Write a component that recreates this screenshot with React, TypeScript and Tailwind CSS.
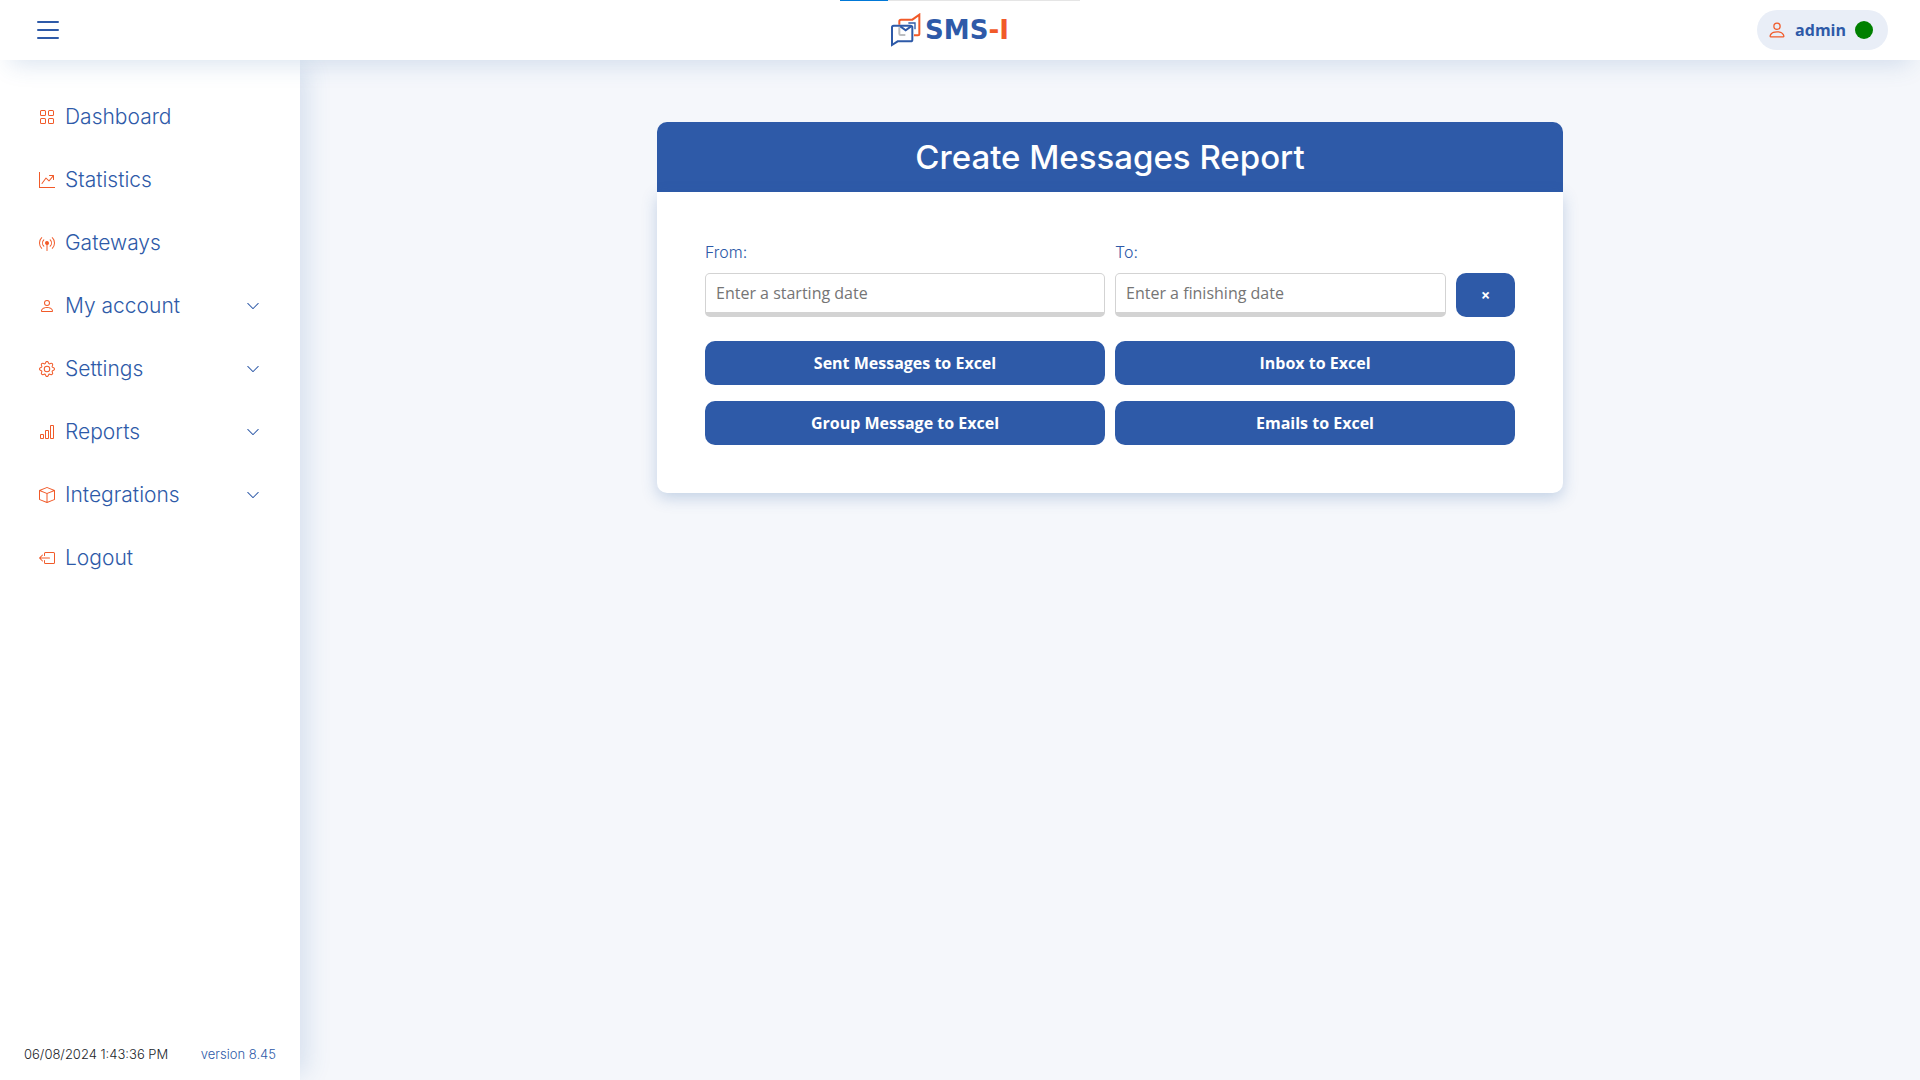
import { FormEvent, useState } from 'react';
import type { IconType } from 'react-icons';
import {
  BsBarChart,
  BsBox,
  BsBoxArrowLeft,
  BsBroadcastPin,
  BsChevronDown,
  BsGear,
  BsGraphUpArrow,
  BsGrid,
  BsList,
  BsPerson
} from 'react-icons/bs';

interface NavItem {
  label: string;
  icon: IconType;
  expandable?: boolean;
}

const navItems: NavItem[] = [
  { label: 'Dashboard', icon: BsGrid },
  { label: 'Statistics', icon: BsGraphUpArrow },
  { label: 'Gateways', icon: BsBroadcastPin },
  { label: 'My account', icon: BsPerson, expandable: true },
  { label: 'Settings', icon: BsGear, expandable: true },
  { label: 'Reports', icon: BsBarChart, expandable: true },
  { label: 'Integrations', icon: BsBox, expandable: true },
  { label: 'Logout', icon: BsBoxArrowLeft }
];

const exports = ['Sent Messages to Excel', 'Inbox to Excel', 'Group Message to Excel', 'Emails to Excel'];

const inputClass =
  'h-11 w-full min-w-0 rounded-[5px] border border-b-[5px] border-[#d3d3d3] bg-white px-2.5 text-base text-gray-800 placeholder:text-[#757575] focus:outline-none';

function Logo() {
  return (
    <a href="#" aria-label="SMS-I" className="flex items-center gap-1 pr-5">
      <svg viewBox="183 39 90 105" className="h-[35px] w-[30px]" fill="none" strokeWidth="6">
        <path d="M208 74V64Q208 59 213 59H247L268 44V103Q268 106 264 106H252" stroke="#f15a29" />
        <path d="M208 82V101Q208 105 212 105H226" stroke="#bcbec0" />
        <path d="M186 135V82Q186 77 191 77H241Q247 77 247 82V119Q247 124 242 124H203Z" stroke="#2e5aa8" />
        <path d="M211 79L227 91L243 79" stroke="#2e5aa8" />
        <path d="M235 69H255V88" stroke="#2e5aa8" strokeWidth="4" />
      </svg>
      <span className="font-['DejaVu_Sans',sans-serif] text-[26px] leading-8 font-bold text-[#2e5aa8]">
        SMS<span className="text-[#f15a29]">-I</span>
      </span>
    </a>
  );
}

function Header({ onToggle }: { onToggle: () => void }) {
  return (
    <header className="relative z-20 grid h-[60px] grid-cols-3 items-center bg-white px-8 shadow-[0_14px_24px_-10px_rgba(46,100,168,0.18)]">
      <div className="absolute top-0 left-1/2 h-px w-60 -translate-x-1/2 bg-[#e5e5e5]">
        <div className="h-full w-1/5 bg-[#0078d7]" />
      </div>

      <button type="button" aria-label="Toggle menu" onClick={onToggle} className="justify-self-start">
        <BsList className="size-8" />
      </button>

      <div className="justify-self-center">
        <Logo />
      </div>

      <button type="button" className="flex h-10 items-center gap-2 justify-self-end rounded-full bg-[#e9eef7] pr-[15px] pl-2.5 font-bold">
        <BsPerson className="size-5 text-[#f15a29]" />
        admin
        <span className="ml-px size-[18px] rounded-full bg-[#008000]" />
      </button>
    </header>
  );
}

function Sidebar() {
  return (
    <aside className="z-10 flex w-[300px] shrink-0 flex-col justify-between bg-white font-['Inter',sans-serif] shadow-[12px_0_24px_-6px_rgba(46,100,168,0.16)]">
      <nav className="pt-[25px]">
        <ul>
          {navItems.map(({ label, icon: Icon, expandable }) => (
            <li key={label}>
              <a href="#" className="flex h-[63px] items-center gap-2.5 pr-10 pl-[39px] text-[21px] font-light">
                <Icon className="size-4 text-[#f15a29]" />
                <span className="grow">{label}</span>
                {expandable && <BsChevronDown className="size-3.5" />}
              </a>
            </li>
          ))}
        </ul>
      </nav>

      <footer className="flex justify-between px-6 py-4 text-[13px] leading-5 font-light">
        <span className="text-[#212529]">06/08/2024 1:43:36 PM</span>
        <a href="#">version 8.45</a>
      </footer>
    </aside>
  );
}

export default function App() {
  const [menuOpen, setMenuOpen] = useState(true);
  const [from, setFrom] = useState('');
  const [to, setTo] = useState('');

  const handleSubmit = (event: FormEvent) => {
    event.preventDefault();
  };

  const clearDates = () => {
    setFrom('');
    setTo('');
  };

  return (
    <div className="flex min-h-screen flex-col bg-[#f5f7fb] font-['Open_Sans',sans-serif] text-[#2e5aa8]">
      <Header onToggle={() => setMenuOpen(!menuOpen)} />

      <div className="flex grow">
        {menuOpen && <Sidebar />}

        <main className="flex grow items-start justify-center px-6 pt-[62px] pb-6">
          <section className="w-full max-w-[906px]">
            <h1 className="rounded-t-[10px] bg-[#2e5aa8] py-[11px] text-center font-['Inter',sans-serif] text-[33px] leading-12 font-medium text-white">
              Create Messages Report
            </h1>

            <form
              onSubmit={handleSubmit}
              className="grid grid-cols-2 gap-x-2.5 gap-y-4 rounded-b-[10px] bg-white p-12 shadow-[0_5px_15px_rgba(46,100,168,0.25)]"
            >
              <div className="mb-2">
                <label htmlFor="from" className="mb-[9px] block font-['Inter',sans-serif] text-base font-light">
                  From:
                </label>
                <input
                  id="from"
                  value={from}
                  onChange={(event) => setFrom(event.target.value)}
                  placeholder="Enter a starting date"
                  className={inputClass}
                />
              </div>

              <div className="mb-2">
                <label htmlFor="to" className="mb-[9px] block font-['Inter',sans-serif] text-base font-light">
                  To:
                </label>
                <div className="flex gap-2.5">
                  <input
                    id="to"
                    value={to}
                    onChange={(event) => setTo(event.target.value)}
                    placeholder="Enter a finishing date"
                    className={inputClass}
                  />
                  <button
                    type="button"
                    aria-label="Clear dates"
                    onClick={clearDates}
                    className="h-11 w-[59px] shrink-0 rounded-[10px] bg-[#2e5aa8] font-bold text-white"
                  >
                    ×
                  </button>
                </div>
              </div>

              {exports.map((label) => (
                <button key={label} type="submit" className="h-11 rounded-[10px] bg-[#2e5aa8] font-bold text-white">
                  {label}
                </button>
              ))}
            </form>
          </section>
        </main>
      </div>
    </div>
  );
}
